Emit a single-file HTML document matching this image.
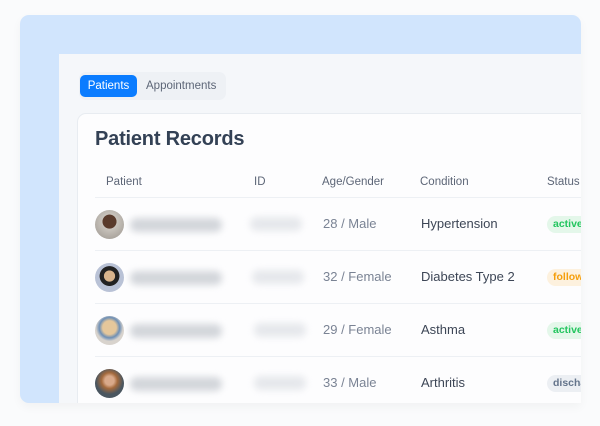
<!DOCTYPE html>
<html><head><style>
*{margin:0;padding:0;box-sizing:border-box}
body{width:600px;height:426px;background:#fafbfc;font-family:"Liberation Sans",sans-serif;position:relative;overflow:hidden}
.blue{position:absolute;left:20px;top:15px;width:561px;height:388px;background:#d1e5fd;border-radius:9px 9px 0 9px;box-shadow:0 4px 10px rgba(0,0,0,0.04);overflow:hidden}
.panel{position:absolute;left:39px;top:39px;width:530px;height:360px;background:#f5f7fa}
.tabs{position:absolute;left:20px;top:18px;width:147px;height:28px;background:#eef1f5;border-radius:7px}
.tab1{position:absolute;left:1px;top:3px;width:57px;height:22px;background:#0a7cff;border-radius:5px;color:#fff;font-size:11.5px;line-height:22px;text-align:center}
.tab2{position:absolute;left:67px;top:3px;font-size:11.5px;line-height:22px;color:#5d6677}
.card{position:absolute;left:18px;top:59px;width:520px;height:300px;background:#fdfdfe;border:1px solid #e8ecf1;border-radius:9px}
h1{position:absolute;left:17px;top:14px;font-size:20px;font-weight:bold;color:#334155;letter-spacing:-0.2px}
.th{position:absolute;top:62px;font-size:11.5px;color:#5d6677}
.row{position:absolute;left:17px;width:520px;height:53px;border-top:1px solid #edf0f4}
.av{position:absolute;left:0;top:12px;width:29px;height:29px;border-radius:50%}
.bl{position:absolute;height:14px;border-radius:7px;background:#d3d6db;filter:blur(3.5px)}
.bl2{position:absolute;height:14px;border-radius:7px;background:#e6e8ec;filter:blur(3.5px)}
.t{position:absolute;top:18px;font-size:13px}
.ag{color:#7a8394}.cd{color:#3d4656}
.b{position:absolute;left:452px;top:18px;height:17px;padding:0 6px;border-radius:8.5px;font-size:10.5px;font-weight:bold;line-height:17px}
</style></head><body>
<div class="blue">
<div class="panel">
<div class="tabs"><div class="tab1">Patients</div><div class="tab2">Appointments</div></div>
<div class="card">
<h1>Patient Records</h1>
<div class="th" style="left:28px">Patient</div>
<div class="th" style="left:176px">ID</div>
<div class="th" style="left:244px">Age/Gender</div>
<div class="th" style="left:342px">Condition</div>
<div class="th" style="left:469px">Status</div>

<div class="row" style="top:83px">
<div class="av" style="background:radial-gradient(circle at 50% 40%,#5a3b2c 0 30%,#c9c4bd 32%,#9a948d 100%)"></div>
<div class="bl" style="left:35px;top:20px;width:92px"></div><div class="bl2" style="left:155px;top:19px;width:52px"></div>
<div class="t ag" style="left:228px">28 / Male</div><div class="t cd" style="left:326px">Hypertension</div>
<div class="b" style="background:#e4f7ea;color:#22c55e">active</div></div>

<div class="row" style="top:136px">
<div class="av" style="background:radial-gradient(circle at 50% 45%,#d9b48c 0 25%,#222 27% 45%,#b9c2d6 47%)"></div>
<div class="bl" style="left:35px;top:20px;width:92px"></div><div class="bl2" style="left:157px;top:19px;width:52px"></div>
<div class="t ag" style="left:228px">32 / Female</div><div class="t cd" style="left:326px">Diabetes Type 2</div>
<div class="b" style="background:#fdf1de;color:#f59e0b">follow</div></div>

<div class="row" style="top:189px">
<div class="av" style="background:radial-gradient(circle at 50% 40%,#e5c79b 0 30%,#6e8fb5 45%,#d8d3cd 60%)"></div>
<div class="bl" style="left:35px;top:20px;width:92px"></div><div class="bl2" style="left:159px;top:19px;width:52px"></div>
<div class="t ag" style="left:228px">29 / Female</div><div class="t cd" style="left:326px">Asthma</div>
<div class="b" style="background:#e4f7ea;color:#22c55e">active</div></div>

<div class="row" style="top:242px">
<div class="av" style="background:radial-gradient(circle at 50% 40%,#d9a98a 0 20%,#a46a3d 35%,#4a5660 60%)"></div>
<div class="bl" style="left:35px;top:20px;width:92px"></div><div class="bl2" style="left:159px;top:19px;width:52px"></div>
<div class="t ag" style="left:228px">33 / Male</div><div class="t cd" style="left:326px">Arthritis</div>
<div class="b" style="background:#eceff3;color:#64748b">discha</div></div>
</div>
</div>
</div>
</body></html>
